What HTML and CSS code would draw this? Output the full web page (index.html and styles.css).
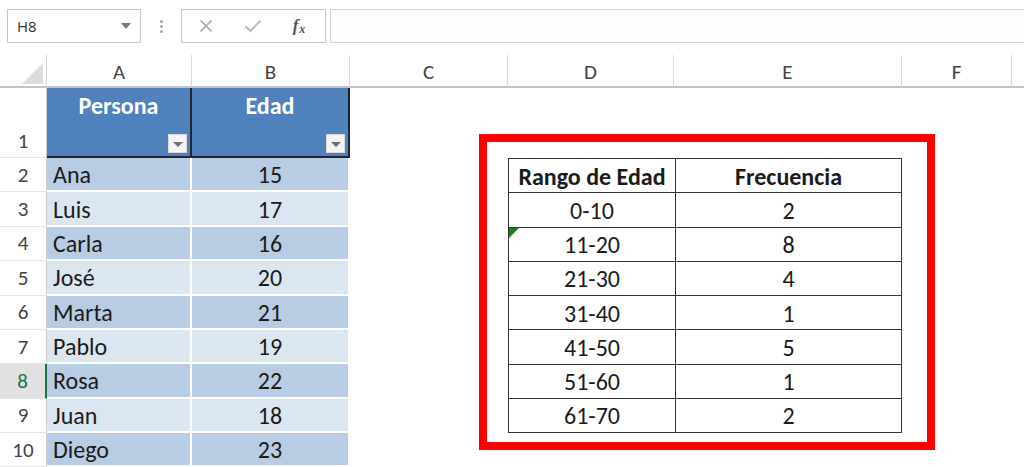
FILE: index.html
```html
<!DOCTYPE html>
<html lang="es">
<head>
<meta charset="utf-8">
<title>Hoja de cálculo</title>
<link rel="stylesheet" href="styles.css">
</head>
<body>
<div class="toolbar">
  <div class="namebox">
    <span>H8</span>
    <svg class="caret" width="10" height="6" viewBox="0 0 10 6"><path d="M0 0 H10 L5 6 Z" fill="#7a7a7a"/></svg>
  </div>
  <div class="grip"><i></i><i></i><i></i></div>
  <div class="fbuttons">
    <span class="fbtn"><svg width="14" height="14" viewBox="0 0 14 14"><path d="M1.5 1.5 L12.5 12.5 M12.5 1.5 L1.5 12.5" stroke="#a6a6a6" stroke-width="1.6" fill="none"/></svg></span>
    <span class="fbtn"><svg width="18" height="14" viewBox="0 0 18 14"><path d="M1.5 7.5 L6.5 12 L16.5 1.5" stroke="#bdbdbd" stroke-width="2" fill="none"/></svg></span>
    <span class="fbtn fx"><i>f</i><span class="fxs">x</span></span>
  </div>
  <div class="finput"></div>
</div>

<div class="sheet">
  <div class="corner"><span class="tri"></span></div>
  <div class="colh">A</div>
  <div class="colh">B</div>
  <div class="colh">C</div>
  <div class="colh">D</div>
  <div class="colh">E</div>
  <div class="colh">F</div>
  <div class="colh last"></div>

  <div class="rowh r1">1</div>
  <div class="th ca">Persona<span class="filter"></span></div>
  <div class="th cb">Edad<span class="filter"></span></div>

  <div class="rowh">2</div><div class="td ca dark">Ana</div><div class="td cb dark">15</div>
  <div class="rowh">3</div><div class="td ca light">Luis</div><div class="td cb light">17</div>
  <div class="rowh">4</div><div class="td ca dark">Carla</div><div class="td cb dark">16</div>
  <div class="rowh">5</div><div class="td ca light">José</div><div class="td cb light">20</div>
  <div class="rowh">6</div><div class="td ca dark">Marta</div><div class="td cb dark">21</div>
  <div class="rowh">7</div><div class="td ca light">Pablo</div><div class="td cb light">19</div>
  <div class="rowh sel">8</div><div class="td ca dark">Rosa</div><div class="td cb dark">22</div>
  <div class="rowh">9</div><div class="td ca light">Juan</div><div class="td cb light">18</div>
  <div class="rowh">10</div><div class="td ca dark">Diego</div><div class="td cb dark">23</div>

  <div class="freq">
    <div class="fh">Rango de Edad</div><div class="fh">Frecuencia</div>
    <div class="fc">0-10</div><div class="fc">2</div>
    <div class="fc warn">11-20</div><div class="fc">8</div>
    <div class="fc">21-30</div><div class="fc">4</div>
    <div class="fc">31-40</div><div class="fc">1</div>
    <div class="fc">41-50</div><div class="fc">5</div>
    <div class="fc">51-60</div><div class="fc">1</div>
    <div class="fc">61-70</div><div class="fc">2</div>
  </div>

  <div class="highlight"></div>
</div>
</body>
</html>
```

FILE: styles.css
```css
* { box-sizing: border-box; }

html, body {
  margin: 0;
  padding: 0;
  background: #ffffff;
  overflow: hidden;
}

body {
  width: 1024px;
  height: 467px;
  font-family: "Carlito", "Lato", "Liberation Sans", sans-serif;
}

/* ---------- formula bar ---------- */
.toolbar {
  display: flex;
  align-items: flex-start;
  height: 55px;
  padding: 9px 0 0 7px;
}

.namebox {
  width: 134px;
  height: 34px;
  border: 1px solid #c6c6c6;
  display: flex;
  align-items: center;
  justify-content: space-between;
  padding: 0 9px 0 9px;
  font-family: "Open Sans", "Liberation Sans", sans-serif;
  font-size: 15px;
  color: #333333;
}

.grip {
  margin-left: 19px;
  height: 34px;
  display: flex;
  flex-direction: column;
  justify-content: center;
  gap: 2px;
}
.grip i {
  display: block;
  width: 3px;
  height: 3px;
  border-radius: 50%;
  background: #a9a9a9;
}

.fbuttons {
  margin-left: 18px;
  width: 145px;
  height: 34px;
  border: 1px solid #c6c6c6;
  display: grid;
  grid-template-columns: 47px 48px 1fr;
  align-items: center;
}
.fbtn {
  display: flex;
  justify-content: center;
  align-items: center;
}
.fx {
  font-family: "Liberation Serif", serif;
  color: #555555;
  font-size: 17px;
  font-weight: bold;
  font-style: italic;
  padding-right: 4px;
  align-items: baseline;
}
.fx i { font-style: italic; }
.fxs {
  font-size: 12px;
  position: relative;
  top: 2px;
  margin-left: 1px;
}

.finput {
  margin-left: 4px;
  flex: 1;
  height: 34px;
  border: 1px solid #d4d4d4;
  border-right: none;
  background: #fdfdfd;
}

/* ---------- sheet ---------- */
.sheet {
  position: relative;
  display: grid;
  grid-template-columns: 47px 145px 158px 158px 166px 228px 110px 1fr;
  grid-template-rows: 33px 70px repeat(9, 34.375px);
  font-size: 24px;
  color: #1b1b1b;
}

.corner {
  border-right: 1px solid #d6d6d6;
  border-bottom: 2px solid #c3c3c3;
  display: flex;
  justify-content: flex-end;
  align-items: flex-end;
  padding: 0 3px 2px 0;
}
.tri {
  width: 0;
  height: 0;
  border-left: 21px solid transparent;
  border-bottom: 21px solid #dcdcdc;
}

.colh {
  border-right: 1px solid #dadada;
  border-bottom: 2px solid #c3c3c3;
  display: flex;
  align-items: center;
  justify-content: center;
  padding-top: 2px;
  font-size: 21px;
  color: #444444;
}
.colh.last { border-right: none; }

.rowh {
  grid-column: 1;
  border-right: 1px solid #d0d0d0;
  border-bottom: 1px solid #e4e4e4;
  display: flex;
  align-items: center;
  justify-content: center;
  font-size: 21px;
  color: #444444;
}
.rowh.r1 {
  align-items: flex-end;
  padding-bottom: 3px;
}
.rowh.sel {
  background: #e1e1e1;
  color: #217346;
  border-right: 2px solid #217346;
}

.ca { grid-column: 2; }
.cb { grid-column: 3; }

.th {
  position: relative;
  background: #4f81bd;
  color: #ffffff;
  font-weight: bold;
  text-align: center;
  padding-top: 3px;
  border-bottom: 2px solid #1d2633;
  border-right: 2px solid #1d2633;
}
.filter {
  position: absolute;
  right: 3px;
  bottom: 3px;
  width: 19px;
  height: 19px;
  background: #f4f4f4;
  border: 1px solid #d8d8d8;
}
.filter::after {
  content: "";
  position: absolute;
  left: 4px;
  top: 7px;
  border-left: 5px solid transparent;
  border-right: 5px solid transparent;
  border-top: 5px solid #6f6f6f;
}

.td {
  display: flex;
  align-items: center;
  border-bottom: 2px solid #ffffff;
  border-right: 2px solid #ffffff;
  padding-top: 1px;
}
.td.ca { padding-left: 6px; }
.td.cb { justify-content: center; }
.dark { background: #b8cce4; }
.light { background: #dce6f1; }

/* ---------- frequency table ---------- */
.freq {
  grid-column: 5 / 7;
  grid-row: 3 / 11;
  display: grid;
  grid-template-columns: 167px 1fr;
  grid-template-rows: repeat(8, 1fr);
  border-top: 1px solid #333333;
  border-left: 1px solid #333333;
}
.fh, .fc {
  position: relative;
  border-right: 1px solid #333333;
  border-bottom: 1px solid #333333;
  display: flex;
  align-items: center;
  justify-content: center;
  padding-top: 1px;
  color: #1b1b1b;
}
.fh { font-weight: bold; }

.warn::before {
  content: "";
  position: absolute;
  left: 0;
  top: 0;
  width: 0;
  height: 0;
  border-top: 10px solid #1a7f1a;
  border-right: 10px solid transparent;
}

/* annotation box drawn over the sheet */
.highlight {
  position: absolute;
  left: 479px;
  top: 79px;
  width: 456px;
  height: 316px;
  border: 8px solid #ff0000;
  pointer-events: none;
}
```
